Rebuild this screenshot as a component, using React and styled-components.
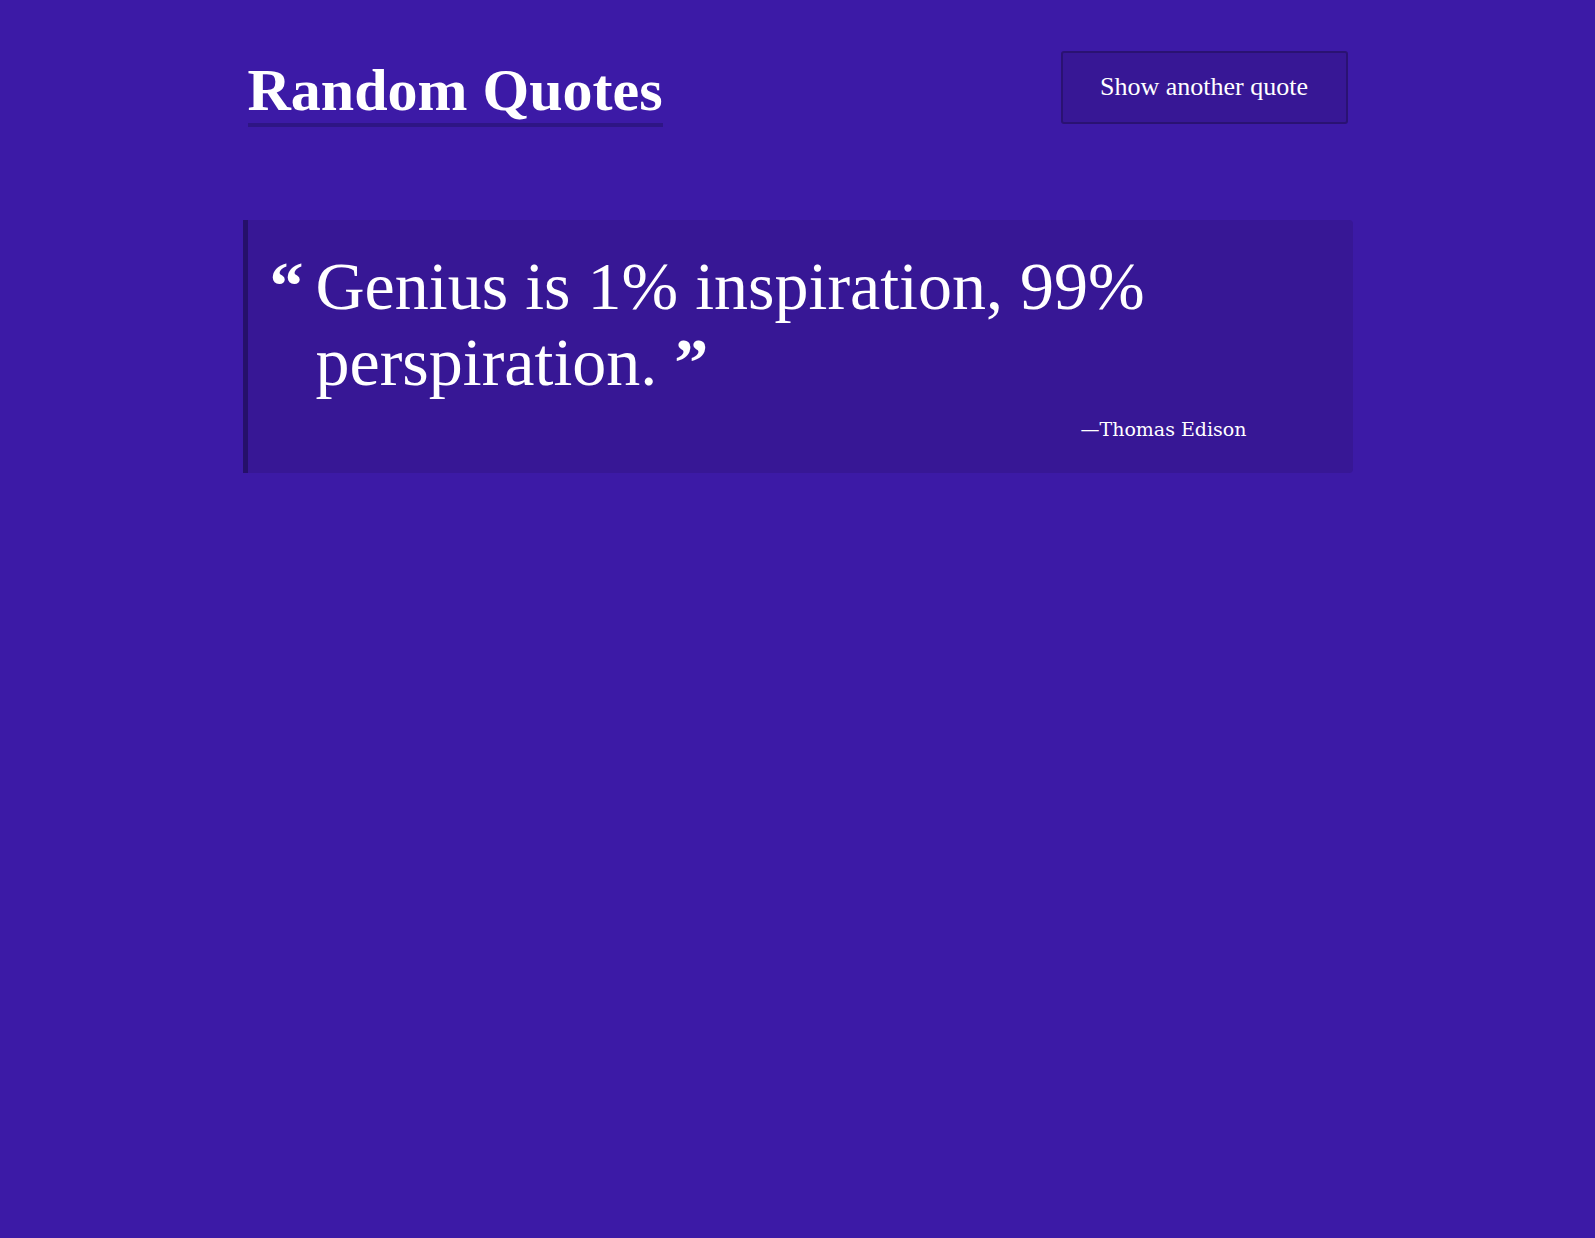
import React from "react";
import styled, { createGlobalStyle } from "styled-components";

const GlobalStyle = createGlobalStyle`
  html, body {
    margin: 0;
    padding: 0;
    background-color: #3c1aa6;
    color: #ffffff;
    font-family: "Liberation Serif", serif;
  }
`;

const Page = styled.div`
  width: 1110px;
  margin: 0 auto;
  padding-top: 47px;
`;

const Header = styled.header`
  display: flex;
  justify-content: space-between;
  align-items: center;
  padding: 0 5px;
`;

const Title = styled.h1`
  margin: 0;
  padding-top: 10px;
  font-family: "Liberation Serif", serif;
  font-size: 60px;
  font-weight: 700;
  line-height: 66px;
  border-bottom: 4px solid #2e1585;
`;

const Button = styled.button`
  width: 287px;
  height: 73px;
  background-color: #371795;
  border: 2px solid #2a1273;
  border-radius: 3px;
  color: #ffffff;
  font-family: "Liberation Serif", serif;
  font-size: 26px;
  cursor: pointer;
`;

const Quote = styled.blockquote`
  margin: 93px 0 0;
  background-color: #371795;
  border-left: 5px solid #25106a;
  border-radius: 0 4px 4px 0;
  padding: 28px 0 32px 22px;
`;

const QuoteRow = styled.div`
  display: flex;
  align-items: flex-start;
  font-family: "Liberation Serif", serif;
  font-size: 68px;
  line-height: 76px;
`;

const Mark = styled.span`
  flex-shrink: 0;
  width: 46px;
  font-weight: 700;
`;

const CloseMark = styled.span`
  font-weight: 700;
`;

const QuoteText = styled.p`
  margin: 0;
  max-width: 980px;
`;

const Attribution = styled.footer`
  text-align: right;
  padding-right: 106px;
  margin-top: 17px;
  font-family: "DejaVu Serif", serif;
  font-size: 19px;
  line-height: 24px;
`;

const App = () => {
  return (
    <>
      <GlobalStyle />
      <Page>
        <Header>
          <Title>Random Quotes</Title>
          <Button>Show another quote</Button>
        </Header>
        <Quote>
          <QuoteRow>
            <Mark>“</Mark>
            <QuoteText>
              Genius is 1% inspiration, 99% perspiration. <CloseMark>”</CloseMark>
            </QuoteText>
          </QuoteRow>
          <Attribution>—Thomas Edison</Attribution>
        </Quote>
      </Page>
    </>
  );
};

export default App;
